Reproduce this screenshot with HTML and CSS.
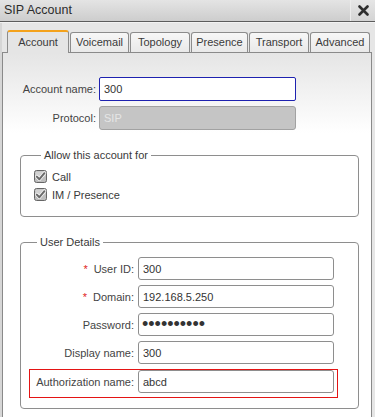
FILE: index.html
```html
<!DOCTYPE html>
<html lang="en">
<head>
<meta charset="utf-8">
<title>SIP Account</title>
<link rel="stylesheet" href="styles.css">
</head>
<body>
<div class="window">
  <div class="titlebar">
    <span class="title">SIP Account</span>
    <button class="close" type="button" aria-label="Close">
      <svg width="11" height="11" viewBox="0 0 11 11"><path d="M1.5 1.5 L9.5 9.5 M9.5 1.5 L1.5 9.5" stroke="#2e2e2e" stroke-width="2.6" stroke-linecap="round"/></svg>
    </button>
  </div>

  <div class="tabs">
    <div class="tab tab-account active">Account</div>
    <div class="tab tab-voicemail">Voicemail</div>
    <div class="tab tab-topology">Topology</div>
    <div class="tab tab-presence">Presence</div>
    <div class="tab tab-transport">Transport</div>
    <div class="tab tab-advanced">Advanced</div>
  </div>

  <div class="panel">
    <div class="top-form">
      <div class="row">
        <label class="lbl top-lbl">Account name:</label>
        <input class="field top-field focused" type="text" value="300">
      </div>
      <div class="row">
        <label class="lbl top-lbl">Protocol:</label>
        <input class="field top-field disabled" type="text" value="SIP" disabled>
      </div>
    </div>

    <fieldset class="group allow">
      <legend>Allow this account for</legend>
      <label class="check">
        <svg class="box" width="13" height="13" viewBox="0 0 13 13">
          <rect x="0.5" y="0.5" width="12" height="12" rx="2" fill="#bdbdbd" stroke="#666666"/>
          <rect x="1.5" y="1.5" width="10" height="5" rx="1" fill="#d2d2d2"/>
          <path d="M2.8 6.6 L5.4 9.2 L10.4 3.2" fill="none" stroke="#f6f6f6" stroke-width="3.6" stroke-linecap="round" stroke-linejoin="round"/>
          <path d="M2.8 6.6 L5.4 9.2 L10.4 3.2" fill="none" stroke="#6a6a6a" stroke-width="2" stroke-linecap="round" stroke-linejoin="round"/>
        </svg>
        <span>Call</span>
      </label>
      <label class="check">
        <svg class="box" width="13" height="13" viewBox="0 0 13 13">
          <rect x="0.5" y="0.5" width="12" height="12" rx="2" fill="#bdbdbd" stroke="#666666"/>
          <rect x="1.5" y="1.5" width="10" height="5" rx="1" fill="#d2d2d2"/>
          <path d="M2.8 6.6 L5.4 9.2 L10.4 3.2" fill="none" stroke="#f6f6f6" stroke-width="3.6" stroke-linecap="round" stroke-linejoin="round"/>
          <path d="M2.8 6.6 L5.4 9.2 L10.4 3.2" fill="none" stroke="#6a6a6a" stroke-width="2" stroke-linecap="round" stroke-linejoin="round"/>
        </svg>
        <span>IM / Presence</span>
      </label>
    </fieldset>

    <fieldset class="group details">
      <legend>User Details</legend>
      <div class="row">
        <label class="lbl det-lbl"><span class="req">*</span>User ID:</label>
        <input class="field det-field" type="text" value="300">
      </div>
      <div class="row">
        <label class="lbl det-lbl"><span class="req">*</span>Domain:</label>
        <input class="field det-field" type="text" value="192.168.5.250">
      </div>
      <div class="row">
        <label class="lbl det-lbl">Password:</label>
        <input class="field det-field password" type="password" value="abcdefghij">
      </div>
      <div class="row">
        <label class="lbl det-lbl">Display name:</label>
        <input class="field det-field" type="text" value="300">
      </div>
      <div class="row highlight">
        <label class="lbl det-lbl">Authorization name:</label>
        <input class="field det-field" type="text" value="abcd">
      </div>
    </fieldset>
  </div>
</div>
</body>
</html>
```

FILE: styles.css
```css
* { box-sizing: border-box; }

html, body {
  margin: 0;
  padding: 0;
  height: 417px;
  overflow: hidden;
}

body {
  background: #e4e4e4;
  font-family: "Liberation Sans", Arial, sans-serif;
  font-size: 11px;
  color: #3a3a3a;
}

.window {
  display: flex;
  flex-direction: column;
  height: 417px;
  background: linear-gradient(to right, #d6d6d6 0, #d6d6d6 2px, #e6e6e6 2px);
}

/* title bar */
.titlebar {
  display: flex;
  align-items: stretch;
  justify-content: space-between;
  height: 22px;
  background: linear-gradient(to bottom, #e4e4e4, #cdcdcd);
  border-bottom: 1px solid #5c5c5c;
  box-shadow: 0 1px 0 #f2f2f2;
}

.title {
  padding-left: 4px;
  font-size: 12.5px;
  line-height: 21px;
  color: #2c2c2c;
}

.close {
  width: 25px;
  margin: 0;
  padding: 0;
  border: 0;
  border-left: 1px solid #ececec;
  background: linear-gradient(to bottom, #e6e6e6, #d4d4d4);
  display: flex;
  align-items: center;
  justify-content: center;
}

/* tabs */
.tabs {
  display: flex;
  align-items: flex-end;
  gap: 1px;
  padding: 8px 0 0 7px;
}

.tab {
  height: 20px;
  line-height: 19px;
  text-align: center;
  color: #3a3a3a;
  border: 1px solid #8c8c8c;
  border-bottom: 0;
  border-radius: 3px 3px 0 0;
  background: linear-gradient(to bottom, #f7f7f7, #e9e9e9);
}

.tab.active {
  height: 23px;
  margin-bottom: -1px;
  line-height: 20px;
  border-top: 2px solid #f4a21c;
  background: #e5e5e5;
  position: relative;
  z-index: 1;
}

.tab-account { width: 62px; }
.tab-voicemail { width: 59px; }
.tab-topology { width: 60px; }
.tab-presence { width: 57px; }
.tab-transport { width: 60px; }
.tab-advanced { width: 60px; }

/* panel */
.panel {
  flex: 1;
  margin: 0 3px 0 2px;
  border: 1px solid #8a8a8a;
  border-bottom: 0;
  background: linear-gradient(to bottom, #e5e5e5 0, #ffffff 80px, #ffffff 100%);
  padding-top: 24px;
}

.row {
  display: flex;
  align-items: center;
}

.lbl {
  text-align: right;
  color: #444;
  white-space: nowrap;
}

.field {
  font-family: "Liberation Sans", Arial, sans-serif;
  font-size: 11px;
  color: #333;
  background: #fff;
  border: 1px solid #8e8e8e;
  border-radius: 3px;
  padding: 0 4px;
  margin: 0;
  outline: none;
}

.top-form {
  display: flex;
  flex-direction: column;
  gap: 5px;
}

.top-lbl {
  width: 93px;
  margin-right: 3px;
}

.top-field {
  width: 197px;
  height: 24px;
}

.top-field.focused {
  border-color: #1e22b0;
  border-radius: 2px;
}

.top-field.disabled {
  background: #c5c5c5;
  border-color: #a2a2a2;
  color: #e6e6e6;
}

/* groups */
.group {
  margin: 0 12px 0 17px;
  border: 1px solid #8e8e8e;
  border-radius: 4px;
  padding: 0;
  min-width: 0;
}

.group legend {
  margin-left: 7px;
  padding: 0 3px;
  line-height: 14px;
  color: #3a3a3a;
}

.allow {
  margin-top: 18px;
  padding: 8px 0 15px 13px;
  display: flex;
  flex-direction: column;
  gap: 5px;
}

.check {
  display: flex;
  align-items: center;
  gap: 5px;
  height: 13px;
  color: #3a3a3a;
}

.box { display: block; flex: none; }

.details {
  margin-top: 18px;
  padding: 8px 0 10px 9px;
  display: flex;
  flex-direction: column;
  gap: 5px;
}

.det-lbl {
  width: 104px;
  margin-right: 4px;
}

.det-field {
  width: 196px;
  height: 23px;
}

.req {
  color: #e01b1b;
  margin-right: 6px;
}

.field.password {
  font-size: 18px;
  letter-spacing: 0;
  padding-left: 3px;
}

.highlight {
  align-self: flex-start;
  margin-left: -1px;
  border: 1px solid #e41414;
  padding: 0 3px 4px 0;
}
```
